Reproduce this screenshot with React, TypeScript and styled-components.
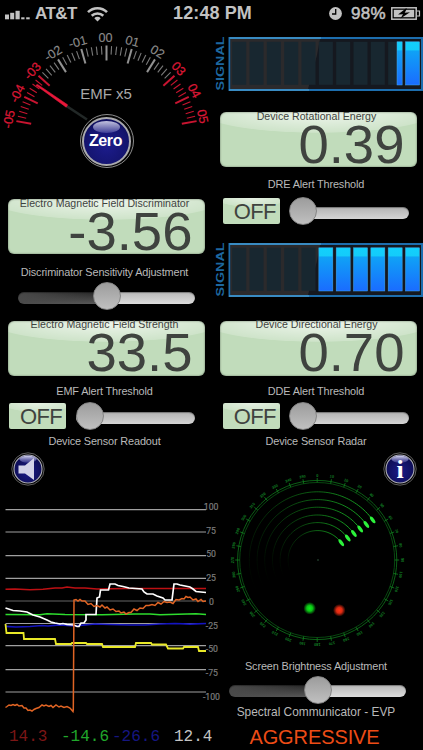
import React from "react";
import styled, { createGlobalStyle } from "styled-components";

const GlobalStyle = createGlobalStyle`
  html, body { margin: 0; padding: 0; background: #000; }
  * { box-sizing: border-box; }
`;

const Screen = styled.div`
  width: 423px;
  height: 750px;
  overflow: hidden;
  display: flex;
  flex-direction: column;
  background: #000;
  color: #b9b9b9;
  font-family: "Liberation Sans", Arial, sans-serif;
`;

const StatusBar = styled.header`
  height: 27px;
  flex: none;
  display: grid;
  grid-template-columns: 1fr auto 1fr;
  align-items: center;
  padding: 0 3px 0 5px;
  color: #c2c2c2;
  font-size: 17px;
  font-weight: bold;
  line-height: 27px;
`;

const StatusGroup = styled.div<{ $end?: boolean }>`
  display: flex;
  align-items: center;
  justify-content: ${(p) => (p.$end ? "flex-end" : "flex-start")};
`;

const Carrier = styled.span`
  margin: 0 10px 0 5px;
  letter-spacing: -0.55px;
`;

const Clock = styled.span`
  font-size: 18px;
  letter-spacing: 0.1px;
`;

const Percent = styled.span`
  margin: 0 5px 0 9px;
  font-size: 17px;
  font-weight: normal;
  -webkit-text-stroke: 0.5px #c2c2c2;
  letter-spacing: 0.3px;
`;

const Panels = styled.main`
  display: grid;
  grid-template-columns: 212px 211px;
  height: 723px;
`;

const Column = styled.section`
  display: flex;
  flex-direction: column;
  min-width: 0;
`;

const Drawing = styled.svg`
  display: block;
  flex: none;
  overflow: visible;
  font-family: "Liberation Sans", Arial, sans-serif;
`;

const GaugeArea = styled.div`
  height: 172px;
  position: relative;
`;

const ZeroButton = styled.button`
  position: absolute;
  left: 79.5px;
  top: 87px;
  width: 54px;
  height: 54px;
  border: 1px solid #8d8d8d;
  border-radius: 50%;
  padding: 1.5px;
  background: #050505;
`;

const ZeroFace = styled.span`
  position: relative;
  display: flex;
  align-items: center;
  justify-content: center;
  width: 100%;
  height: 100%;
  border: 2px solid #aaaaae;
  border-radius: 50%;
  background: radial-gradient(circle at 50% 60%, #1c1c8c 0, #14146e 60%, #0a0a48 100%);
  color: #fff;
  font: bold 16px/1 "Liberation Sans", Arial, sans-serif;
  padding: 0 2px 1px 0;
  letter-spacing: -0.4px;

  &::before {
    content: "";
    position: absolute;
    left: 9px;
    right: 9px;
    top: 2px;
    height: 12px;
    border-radius: 50%;
    background: linear-gradient(180deg, rgba(225, 225, 245, 0.85), rgba(110, 110, 190, 0.45));
  }
`;

const Lcd = styled.div`
  flex: none;
  width: 197px;
  height: 55px;
  margin: 0 0 0 7.5px;
  border-radius: 6px;
  display: flex;
  flex-direction: column;
  color: #3f433f;
  background:
    radial-gradient(ellipse 118px 21px at 50% 0, rgba(255, 255, 255, 0.75) 0, rgba(255, 255, 255, 0.22) 97%, transparent 100%),
    #c1dcbb;
  box-shadow: inset 0 0 2px 0 #5c6a59;
`;

const LcdTitle = styled.div<{ $shift: number }>`
  height: 8px;
  line-height: 8px;
  margin-top: ${(p) => p.$shift}px;
  padding-right: 3px;
  text-align: center;
  white-space: nowrap;
  font-size: 10.6px;
`;

const LcdValue = styled.div`
  height: 46px;
  line-height: 46px;
  margin-top: 2px;
  padding-right: 12px;
  text-align: right;
  font-size: 54.5px;
`;

const Caption = styled.div<{ $h: number; $size?: number }>`
  flex: none;
  height: ${(p) => p.$h}px;
  line-height: ${(p) => p.$h}px;
  padding-right: 3px;
  text-align: center;
  white-space: nowrap;
  font-size: ${(p) => p.$size ?? 10.9}px;
  letter-spacing: ${(p) => (p.$size ? 0 : -0.14)}px;
`;

const ControlRow = styled.div<{ $left: number; $gap?: number; $h?: number }>`
  flex: none;
  height: ${(p) => p.$h ?? 28}px;
  display: flex;
  align-items: center;
  gap: ${(p) => p.$gap ?? 0}px;
  padding-left: ${(p) => p.$left}px;
`;

const OffBadge = styled.div`
  width: 57px;
  height: 26px;
  border-radius: 2px;
  padding: 0 4px 0 0;
  text-align: right;
  line-height: 27px;
  font-size: 22px;
  letter-spacing: -0.7px;
  color: #3f433f;
  background:
    radial-gradient(ellipse 36px 9px at 50% 0, rgba(255, 255, 255, 0.6), rgba(255, 255, 255, 0.2) 95%, transparent 100%),
    #c1dcbb;
`;

const Track = styled.div<{ $w: number; $half?: boolean }>`
  position: relative;
  width: ${(p) => p.$w}px;
  height: 12px;
  margin-top: 3px;
  border-radius: 6px;
  background: ${(p) =>
    p.$half
      ? "linear-gradient(90deg, #4a4a4a 0, transparent 50%), linear-gradient(180deg, #222 0, #5a5a5a 100%) left / 50% 100% no-repeat, linear-gradient(180deg, #b8b8b8, #dcdcdc)"
      : "linear-gradient(180deg, #b2b2b2, #d4d4d4)"};
  box-shadow: inset 0 1px 1px rgba(0, 0, 0, 0.35);
`;

const Knob = styled.span<{ $x: number }>`
  position: absolute;
  left: ${(p) => p.$x - 14}px;
  top: -9.5px;
  width: 28px;
  height: 28px;
  border-radius: 50%;
  border: 1px solid #858585;
  background: linear-gradient(180deg, #9c9c9c, #c0c0c0);
`;

const ButtonRow = styled.div<{ $end?: boolean }>`
  flex: none;
  height: 35px;
  display: flex;
  justify-content: ${(p) => (p.$end ? "flex-end" : "flex-start")};
  padding: 0 6px 0 11px;
`;

const ChartArea = styled.div`
  height: 238px;
  flex: none;
`;

const Readings = styled.div`
  flex: none;
  height: 24px;
  padding-left: 9px;
  display: grid;
  grid-template-columns: 52px 51px 62px 40px;
  line-height: 24px;
  font-family: "Liberation Mono", monospace;
  font-size: 16px;
`;

const Reading = styled.span<{ $color: string }>`
  color: ${(p) => p.$color};
`;

const Spacer = styled.div<{ $h: number }>`
  flex: none;
  height: ${(p) => p.$h}px;
`;

const Mode = styled.div`
  flex: none;
  height: 28px;
  line-height: 30px;
  padding-right: 6px;
  text-align: center;
  font-size: 20px;
  color: #ed4c16;
  letter-spacing: -0.1px;
`;

const GCX = 106.5;
const GCY = 110;

function polar(cx: number, cy: number, r: number, deg: number) {
  const a = (deg * Math.PI) / 180;
  return [cx + r * Math.sin(a), cy - r * Math.cos(a)];
}

function Gauge() {
  const ticks = [];
  for (let i = -25; i <= 25; i++) {
    const deg = i * 3.2;
    const major = i % 5 === 0;
    const [x1, y1] = polar(GCX, GCY, major ? 91.5 : 91, deg);
    const [x2, y2] = polar(GCX, GCY, major ? 76.5 : 82.5, deg);
    const red = Math.abs(i) >= 15;
    ticks.push(
      <line key={i} x1={x1} y1={y1} x2={x2} y2={y2} stroke={red ? "#c81430" : major ? "#929292" : "#7a7a7a"} strokeWidth={major ? 2 : 1.1} />
    );
  }
  const labels = [-5, -4, -3, -2, -1, 0, 1, 2, 3, 4, 5];
  return (
    <GaugeArea>
      <Drawing width="212" height="172" viewBox="0 0 212 172">
        {ticks}
        {labels.map((n) => {
          const hot = Math.abs(n) >= 3;
          return (
            <text
              key={n}
              transform={`rotate(${n * 15.7} ${GCX} ${GCY})`}
              x={n < 0 ? GCX - 2 : GCX - 1}
              y={GCY - (n === 5 ? 94 : 95)}
              textAnchor="middle"
              fontSize="12.6"
              fill={hot ? "#d81734" : "#8a8a8a"}
              stroke={hot ? "#d81734" : "#8a8a8a"}
              strokeWidth={hot ? 0.3 : 0.15}
            >
              {`${n < 0 ? "-" : ""}0${Math.abs(n)}`}
            </text>
          );
        })}
        <text x="106" y="71.5" textAnchor="middle" fontSize="15" fill="#a8a8a8">EMF x5</text>
        <path d="M65 78 L87 92.5" stroke="#222827" strokeWidth="2.6" />
        <path d="M36 58.2 L37.5 57.4 L67.6 77.8 L66.2 80.2 Z" fill="#e8183a" stroke="#e8183a" strokeWidth="0.6" />
      </Drawing>
      <ZeroButton>
        <ZeroFace>Zero</ZeroFace>
      </ZeroButton>
    </GaugeArea>
  );
}

function SignalMeter({ id, litFrom }: { id: string; litFrom: number }) {
  return (
    <Drawing width="211" height="54" viewBox="0 0 211 54">
      <defs>
        <linearGradient id={id} x1="0" y1="0" x2="0" y2="1">
          <stop offset="0" stopColor="#12d0fc" />
          <stop offset="0.19" stopColor="#14ccfa" />
          <stop offset="0.21" stopColor="#0fa2f6" />
          <stop offset="1" stopColor="#1a6cff" />
        </linearGradient>
      </defs>
      <text transform="translate(11.7 53.5) rotate(-90)" fontSize="10.5" fontWeight="bold" textLength="54" lengthAdjust="spacingAndGlyphs" fill="#1d679f">SIGNAL</text>
      <rect x="17.5" y="1" width="192.5" height="52" fill="#15181f" stroke="#1d6eae" strokeWidth="2" />
      <path d="M18.5 2 H108 L105 18 L96 52 H18.5 Z" fill="#2b2a2c" />
      {Array.from({ length: 11 }, (_, i) => (
        <rect key={i} x={20.2 + i * 17.33} y="4.8" width="14" height="43" fill="#182730" />
      ))}
      {Array.from({ length: 11 }, (_, i) => {
        const x = 20.2 + i * 17.33;
        const start = Math.max(x, litFrom);
        const w = x + 14 - start;
        return w > 0 ? <rect key={i} x={start} y="4.8" width={w} height="43.2" fill={`url(#${id})`} stroke="#43a8e8" strokeWidth="0.5" /> : null;
      })}
      <path d="M17.5 0 H109 V2 H17.5 Z M17 52 H97 V54 H17 Z" fill="#398bc2" />
    </Drawing>
  );
}

interface LcdProps {
  title: string;
  value: string;
  shift?: number;
}

function LcdPanel({ title, value, shift = 0 }: LcdProps) {
  return (
    <Lcd>
      <LcdTitle $shift={shift}>{title}</LcdTitle>
      <LcdValue>{value}</LcdValue>
    </Lcd>
  );
}

function ThresholdRow({ left }: { left: number }) {
  return (
    <ControlRow $left={left} $gap={10}>
      <OffBadge>OFF</OffBadge>
      <Track $w={119}>
        <Knob $x={13.5} />
      </Track>
    </ControlRow>
  );
}

function RoundIcon({ kind }: { kind: "speaker" | "info" }) {
  const g = `face-${kind}`;
  return (
    <Drawing width="34" height="34" viewBox="0 0 34 34">
      <defs>
        <radialGradient id={g} cx="0.5" cy="0.6" r="0.55">
          <stop offset="0" stopColor="#1b1b88" />
          <stop offset="1" stopColor="#0d0d54" />
        </radialGradient>
        <linearGradient id={`${g}-gloss`} x1="0" y1="0" x2="0" y2="1">
          <stop offset="0" stopColor="#d4d4ee" />
          <stop offset="1" stopColor="#5858b0" stopOpacity="0.5" />
        </linearGradient>
      </defs>
      <circle cx="17" cy="17" r="16.2" fill="#020202" stroke="#777" strokeWidth="0.8" />
      <circle cx="17" cy="17" r="14" fill={`url(#${g})`} stroke="#b0b0b8" strokeWidth="1.1" />
      <ellipse cx="17" cy="7.3" rx="8.4" ry="3.5" fill={`url(#${g}-gloss)`} />
      {kind === "speaker" ? (
        <path d="M7.5 13.5 H14 L23 6 V28 L14 21.5 H7.5 Z" fill="#d2d2e8" />
      ) : (
        <text x="17" y="26" textAnchor="middle" fontFamily="Liberation Serif, serif" fontWeight="bold" fontSize="26" fill="#fff">i</text>
      )}
    </Drawing>
  );
}

const GRID = [
  { v: "100", y: 22.7, ty: 19.5 },
  { v: "75", y: 45, ty: 43.5 },
  { v: "50", y: 68.7, ty: 67.2 },
  { v: "25", y: 91.3, ty: 91 },
  { v: "0", y: 114, ty: 114.5 },
  { v: "-25", y: 136.5, ty: 138.5 },
  { v: "-50", y: 158.7, ty: 161.8 },
  { v: "-75", y: 182.7, ty: 185.5 },
  { v: "-100", y: 205, ty: 209.5 },
];

const WHITE = "5.5,121 13,123.5 20,124 27,125 33,128 40,130 47,133 51,135 55,136 60,137 63,136.5 67,137.5 74,138 77,139.5 79,139.5 81,136 84,136 86,133 86,127.5 96,127.5 97,111 99.5,110 100.5,103 108.5,103 110,97 115,97 118,98.5 123,99.5 129,101 142,102 144,105 147,107 153,107 157,109 163,111 165,113 172,113 174,97 177,97 180,98 190,100 193,102 196,104.5 206,105.5";
const ORANGE = "5.5,220.5 7,219.5 9,218 11,218.5 13,217.5 15,218.5 17,217.5 19,219 22,218.5 24,221 26,221 28,223.5 30,223 32,224 34,222.5 36,221.5 39,220.5 42,218 44,219 46,218 49,219.5 51,218.5 53,220.5 56,218 59,220 61,219 64,220.5 67,219.5 70,221 73,224.5 73.3,223 74,113 76,112.5 78,114 80,112.5 82,114 85,114 88,117.5 91,116.5 94,119.5 97,118.5 100,120 102,118 105,121 107,120 110,123 113,122 116,124.5 119,124 121,126 124,125 126,127 129,125.5 131,125.5 134,122 137,123.5 140,121 143,121.5 146,118.5 149,118.5 152,117.5 155,118.5 158,115.5 161,117 164,114.5 167,115.5 170,115 173,116.5 176,112.5 179,113 182,111.5 184,112 186,109.5 188,110.5 190,110 193,113 196,112 198,114.5 201,112.5 203,114.5 206,114";
const YELLOW = "5.5,137 6.5,146 23.5,146 24,152 55,152 56,157 71,157 72,156 86,156 87,157 102,157 103,160 135,160 136,156 151,156 152,157.5 166,157.5 168,161.5 183,161.5 184,160 198,160 199,164 206,164";

function Readout() {
  return (
    <Drawing width="222" height="238" viewBox="0 0 222 238" fill="none">
      {GRID.map((g) => (
        <path key={g.v} d={`M5.5 ${g.y}H206`} stroke={g.v === "0" ? "#666" : "#a0a0a0"} strokeWidth="1.2" />
      ))}
      <polyline points="5.5,102.3 15,102 30,102.8 43,102.3 55,101 62,101 67,100 75,101 85,101 97,102 125,101.5 160,101.5 206,101.5" stroke="#bd1013" strokeWidth="1.5" />
      <polyline points="5.5,127.5 40,127.8 47,126.8 65,127.5 102,127.8 135,127 150,127 160,127.7 196,126.7 206,127.5" stroke="#2edc2e" strokeWidth="1.6" />
      <polyline points="5.5,139.3 16,140 30,139.5 42,138.5 48,139 60,137.8 75,138.8 95,137 110,137.5 130,138 145,138 160,137 175,136.5 190,137.2 206,136.5" stroke="#1414c0" strokeWidth="1.7" />
      <polyline points={YELLOW} stroke="#e8e828" strokeWidth="1.8" />
      <polyline points={WHITE} stroke="#fff" strokeWidth="1.7" />
      <polyline points={ORANGE} stroke="#e06424" strokeWidth="1.5" />
      {GRID.map((g) => (
        <text
          key={g.v}
          x={g.v === "100" ? 218.5 : g.v === "-100" ? 220 : g.v === "0" ? 214 : g.v.length === 3 ? 218 : 216}
          y={g.ty + 3}
          textAnchor="end"
          fontSize="8.7"
          fontFamily="Roboto, sans-serif"
          fill="#7c7c7c"
          stroke="#7c7c7c"
          strokeWidth="0.2"
        >
          {g.v}
        </text>
      ))}
    </Drawing>
  );
}

function Radar() {
  const cx = 105.5;
  const cy = 73;
  const arcs: React.ReactNode[] = [];
  [68.2, 60.4, 52.8, 45, 37.4, 29.4].forEach((r, k) => {
    const head = 53;
    const tail = -125;
    const step = 4;
    for (let a = head; a > tail; a -= step) {
      const [x1, y1] = polar(cx, cy, r, a);
      const [x2, y2] = polar(cx, cy, r, a - step);
      const f = Math.max(0, (a - tail) / (head - tail));
      arcs.push(<path key={`${k}-${a}`} d={`M${x1} ${y1} A${r} ${r} 0 0 0 ${x2} ${y2}`} stroke="#19ae25" strokeOpacity={Math.pow(f, 1.7)} strokeWidth="1" />);
    }
    const [hx, hy] = polar(cx, cy, r, head + 1);
    arcs.push(<ellipse key={`h${k}`} cx={hx} cy={hy} rx="4" ry="1.7" transform={`rotate(53 ${hx} ${hy})`} fill="#2cf23b" />);
  });
  const marks = Array.from({ length: 36 }, (_, i) => i);
  return (
    <Drawing width="211" height="166" viewBox="0 0 211 166" fill="none">
      <defs>
        <radialGradient id="blip-green">
          <stop offset="0" stopColor="#0cf018" />
          <stop offset="0.45" stopColor="#0bc515" />
          <stop offset="1" stopColor="#0bc515" stopOpacity="0" />
        </radialGradient>
        <radialGradient id="blip-red">
          <stop offset="0" stopColor="#ff3415" />
          <stop offset="0.45" stopColor="#dc2a12" />
          <stop offset="1" stopColor="#dc2a12" stopOpacity="0" />
        </radialGradient>
      </defs>
      <circle cx={cx - 0.3} cy={cy} r="79.6" stroke="#0d6a18" strokeWidth="0.9" />
      <circle cx={cx - 0.3} cy={cy} r="77.5" stroke="#0a5914" strokeWidth="0.8" />
      {marks.map((i) => {
        const [x1, y1] = polar(cx - 0.3, cy, 77.5, i * 10);
        const [x2, y2] = polar(cx - 0.3, cy, 82, i * 10);
        return <path key={i} d={`M${x1} ${y1}L${x2} ${y2}`} stroke="#128320" strokeWidth="0.8" />;
      })}
      {marks.map((i) => {
        const [x, y] = polar(cx - 0.3, cy, 84.7, i * 10);
        return (
          <text key={i} x={x} y={y} dy="1.3" textAnchor="middle" fontSize="3.8" fontWeight="bold" fill="#128024" transform={`rotate(${i * 10} ${x} ${y})`}>
            {i * 10}
          </text>
        );
      })}
      {arcs}
      <circle cx="106" cy="73" r="0.8" fill="#335b42" />
      <circle cx="97.7" cy="121.3" r="6.3" fill="url(#blip-green)" />
      <circle cx="127.3" cy="123.3" r="6.3" fill="url(#blip-red)" />
    </Drawing>
  );
}

function Battery() {
  return (
    <Drawing width="29" height="13" viewBox="0 0 29 13">
      <rect x="0.8" y="0.8" width="24.4" height="11.4" fill="none" stroke="#c2c2c2" strokeWidth="1.5" />
      <rect x="2.8" y="2.8" width="20.4" height="7.4" fill="#c2c2c2" />
      <path d="M26 4 H28.5 V9 H26" fill="none" stroke="#c2c2c2" strokeWidth="1.2" />
      <path d="M14.8 1.5 L7 7.6 L12 7.2 L9.5 11.5 L19 5.3 L13.7 5.7 L16 1.5 Z" fill="#000" />
    </Drawing>
  );
}

export default function App() {
  return (
    <Screen>
      <GlobalStyle />
      <StatusBar>
        <StatusGroup>
          <Drawing width="25" height="14" viewBox="0 0 25 14" fill="#c2c2c2">
            <rect x="0" y="7.5" width="4" height="4.8" />
            <rect x="5.2" y="5.8" width="4" height="6.5" />
            <rect x="10.5" y="3.8" width="4.2" height="8.5" />
            <rect x="16.2" y="10.3" width="3.3" height="2" />
            <rect x="21.2" y="10.3" width="3.5" height="2" />
          </Drawing>
          <Carrier>AT&amp;T</Carrier>
          <Drawing width="21" height="16" viewBox="0 0 21 16" fill="none" stroke="#c2c2c2" strokeWidth="2.6">
            <path d="M1 6.2 A13.5 13.5 0 0 1 20 6.2" />
            <path d="M4.7 9.8 A8.3 8.3 0 0 1 16.3 9.8" />
            <path d="M10.5 15.5 L7.3 12.2 A4.5 4.5 0 0 1 13.7 12.2 Z" fill="#c2c2c2" stroke="none" />
          </Drawing>
        </StatusGroup>
        <Clock>12:48 PM</Clock>
        <StatusGroup $end>
          <Drawing width="13" height="13" viewBox="0 0 13 13">
            <circle cx="6.5" cy="6.5" r="6.4" fill="#c2c2c2" />
            <path d="M6.7 2 V7 H3" fill="none" stroke="#000" strokeWidth="1.3" />
          </Drawing>
          <Percent>98%</Percent>
          <Battery />
        </StatusGroup>
      </StatusBar>

      <Panels>
        <Column>
          <Gauge />
          <LcdPanel title="Electro Magnetic Field Discriminator" value="-3.56" />
          <Spacer $h={4} />
          <Caption $h={28}>Discriminator Sensitivity Adjustment</Caption>
          <ControlRow $left={18} $h={20}>
            <Track $w={177} $half>
              <Knob $x={88.7} />
            </Track>
          </ControlRow>
          <Spacer $h={15} />
          <LcdPanel title="Electro Magnetic Field Strength" value="33.5" shift={-1} />
          <Spacer $h={4} />
          <Caption $h={22}>EMF Alert Threshold</Caption>
          <ThresholdRow left={9} />
          <Caption $h={22}>Device Sensor Readout</Caption>
          <ButtonRow>
            <RoundIcon kind="speaker" />
          </ButtonRow>
          <ChartArea>
            <Readout />
          </ChartArea>
          <Readings>
            <Reading $color="#7c1616">14.3</Reading>
            <Reading $color="#20a82b">-14.6</Reading>
            <Reading $color="#161680">-26.6</Reading>
            <Reading $color="#c4c4c4">12.4</Reading>
          </Readings>
        </Column>

        <Column>
          <Spacer $h={10} />
          <SignalMeter id="lit-a" litFrom={185} />
          <Spacer $h={21} />
          <LcdPanel title="Device Rotational Energy" value="0.39" />
          <Spacer $h={4} />
          <Caption $h={26}>DRE Alert Threshold</Caption>
          <ThresholdRow left={10.7} />
          <Spacer $h={18} />
          <SignalMeter id="lit-b" litFrom={106} />
          <Spacer $h={24} />
          <LcdPanel title="Device Directional Energy" value="0.70" shift={-1} />
          <Spacer $h={4} />
          <Caption $h={22}>DDE Alert Threshold</Caption>
          <ThresholdRow left={10.7} />
          <Caption $h={22}>Device Sensor Radar</Caption>
          <ButtonRow $end>
            <RoundIcon kind="info" />
          </ButtonRow>
          <Radar />
          <Spacer $h={2} />
          <Caption $h={22}>Screen Brightness Adjustment</Caption>
          <ControlRow $left={17} $h={25}>
            <Track $w={177} $half>
              <Knob $x={88.7} />
            </Track>
          </ControlRow>
          <Caption $h={20} $size={11.9}>Spectral Communicator - EVP</Caption>
          <Mode>AGGRESSIVE</Mode>
        </Column>
      </Panels>
    </Screen>
  );
}
